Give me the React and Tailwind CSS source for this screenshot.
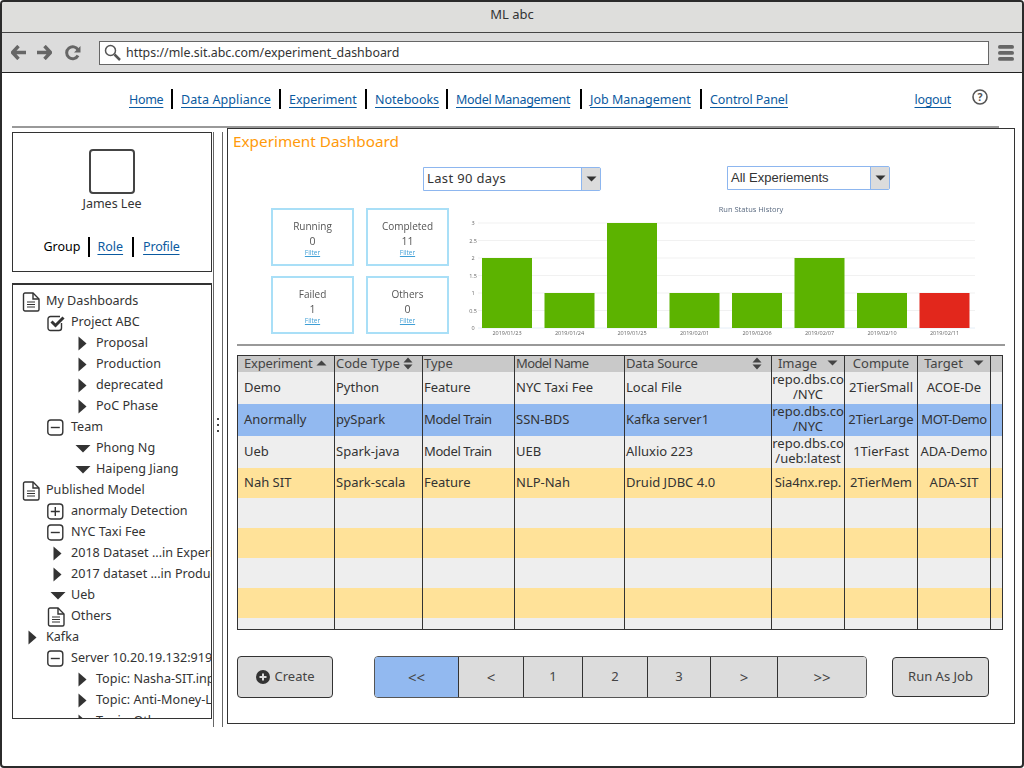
import React from "react";

const font = "font-['Noto_Sans','Open_Sans',sans-serif]";

const Sep = () => <span className="w-[2px] h-[20px] bg-black shrink-0" />;
const Lnk = ({ children, className = "" }) => (
  <a className={`text-[#0b5aa0] underline underline-offset-[3px] decoration-[1px] whitespace-nowrap text-[12.500px] ${className}`}>{children}</a>
);

const Doc = () => (
  <svg width="18" height="20" viewBox="0 0 18 20" fill="none" stroke="#333" strokeWidth="1.4">
    <path d="M3 1h8l6 6v10.500a1.500 1.500 0 0 1-1.500 1.500h-12.500a1.500 1.500 0 0 1-1.500-1.500v-15a1.500 1.500 0 0 1 1.500-1.500z" />
    <path d="M11 1v6h6" />
    <path d="M5 10h8M5 12.500h8M5 15h8" strokeWidth="1.200" />
  </svg>
);
const Box = ({ children }) => (
  <svg width="17" height="17" viewBox="0 0 17 17" fill="none" stroke="#333" strokeWidth="1.400">
    <rect x="0.800" y="1" width="15" height="15" rx="3" />
    {children}
  </svg>
);
const Check = () => (
  <svg width="18" height="18" viewBox="0 0 18 18" fill="none">
    <path d="M14.500 9v5a2.500 2.500 0 0 1-2.500 2.500h-8.500a2.500 2.500 0 0 1-2.500-2.500v-9a2.500 2.500 0 0 1 2.500-2.500h9.500" stroke="#333" strokeWidth="1.400" />
    <path d="M4.500 7.500l4 4 8-8" stroke="#333" strokeWidth="3" />
  </svg>
);
const Plus = () => <Box><path d="M8.300 4v9M3.800 8.500h9" /></Box>;
const Minus = () => <Box><path d="M3.800 8.500h9" /></Box>;
const Right = () => (
  <svg width="9" height="15" viewBox="0 0 9 15"><path d="M0.500 0.500L8.500 7.500L0.500 14.500z" fill="#333" /></svg>
);
const Down = () => (
  <svg width="16" height="9" viewBox="0 0 16 9"><path d="M0.500 1h15L8 8.500z" fill="#333" /></svg>
);
const CaretD = ({ c = "#333" }) => (
  <svg width="11" height="6" viewBox="0 0 11 6"><path d="M0.500 0.500h10L5.500 5.500z" fill={c} /></svg>
);
const CaretU = () => (
  <svg width="11" height="6" viewBox="0 0 11 6"><path d="M0.500 5.500h10L5.500 0.500z" fill="#444" /></svg>
);
const Sort = () => (
  <svg width="10" height="13" viewBox="0 0 10 13"><path d="M0.500 5.500h9L5 0.500zM0.500 7.500h9L5 12.500z" fill="#444" /></svg>
);

const ICONS = { doc: Doc, check: Check, plus: Plus, minus: Minus, right: Right, down: Down };

const tree = [
  [0, "doc", "My Dashboards"],
  [1, "check", "Project ABC"],
  [2, "right", "Proposal"],
  [2, "right", "Production"],
  [2, "right", "deprecated"],
  [2, "right", "PoC Phase"],
  [1, "minus", "Team"],
  [2, "down", "Phong Ng"],
  [2, "down", "Haipeng Jiang"],
  [0, "doc", "Published Model"],
  [1, "plus", "anormaly Detection"],
  [1, "minus", "NYC Taxi Fee"],
  [1, "right", "2018 Dataset ...in Experiment"],
  [1, "right", "2017 dataset ...in Production"],
  [1, "down", "Ueb"],
  [1, "doc", "Others"],
  [0, "right", "Kafka"],
  [1, "minus", "Server 10.20.19.132:9192"],
  [2, "right", "Topic: Nasha-SIT.input"],
  [2, "right", "Topic: Anti-Money-Laundering"],
  [2, "right", "Topic: Others"],
];
const PAD = ["pl-[9px]", "pl-[34px]", "pl-[59px]"];

const Stat = ({ t, n }) => (
  <div className="w-[83px] h-[58px] border-2 border-[#a9dff7] flex flex-col items-center pt-[9px] text-[#555] font-['Open_Sans',sans-serif] blur-[0.3px]">
    <span className="text-[10px] leading-[15px]">{t}</span>
    <span className="text-[10.500px] leading-[14px]">{n}</span>
    <span className="text-[6.500px] leading-[9px] text-[#3f9fd6] underline">Filter</span>
  </div>
);

const bars = [
  [482, 2, "2019/01/23"],
  [544.500, 1, "2019/01/24"],
  [607, 3, "2019/01/25"],
  [669.500, 1, "2019/02/01"],
  [732, 1, "2019/02/06"],
  [794.500, 2, "2019/02/07"],
  [857, 1, "2019/02/10"],
  [919.500, 1, "2019/02/11"],
];

const Chart = () => (
  <svg width="515" height="132" viewBox="465 204 515 132" className="blur-[0.35px] shrink-0" fontFamily="Open Sans, sans-serif">
    <text x="751" y="212" textAnchor="middle" fontSize="7.500" fill="#5a6a80">Run Status History</text>
    {[0, 0.5, 1, 1.500, 2, 2.500, 3].map((v) => (
      <g key={v}>
        <line x1="478" x2="975" y1={328 - v * 35} y2={328 - v * 35} stroke={v === 0 ? "#e4eef7" : "#f1f1f1"} strokeWidth="1" />
        <text x="473" y={330 - v * 35} textAnchor="middle" fontSize="5.500" fill="#666">{v}</text>
      </g>
    ))}
    {bars.map(([x, v, l], i) => (
      <g key={l}>
        <rect x={x} y={328 - v * 35} width="50" height={v * 35} fill={i === 7 ? "#e2271c" : "#5cb300"} />
        <text x={x + 25} y="334.500" textAnchor="middle" fontSize="5.500" fill="#666">{l}</text>
      </g>
    ))}
  </svg>
);

const CELLS = ["pl-[6px]", "pl-[1px]", "pl-[1px]", "pl-[1px]", "pl-[1px]", "justify-center text-center text-[12.400px] leading-[14px]", "justify-center text-center", "justify-center text-center", ""];
const TRACK = { "Model Train": "tracking-[-0.4px]", "MOT-Demo": "tracking-[-0.5px]", "Sia4nx.rep.": "tracking-[-0.1px]" };
const Row = ({ bg, h, cells = [] }) => (
  <div className={`grid grid-cols-[97px_88px_92px_110px_147px_73px_73px_73px_11px] ${bg} ${h} shrink-0`}>
    {CELLS.map((c, i) => (
      <div key={i} className={`flex items-center pb-[2px] ${i < 8 ? "border-r border-[#333]" : ""} text-[#333] text-[13px] leading-[15px] overflow-hidden whitespace-pre-line ${c}`}>
        <span className={TRACK[cells[i]] || ""}>{cells[i]}</span>
      </div>
    ))}
  </div>
);

const rows = [
  ["bg-[#eeeeee]", "h-[32px]", ["Demo", "Python", "Feature", "NYC Taxi Fee", "Local File", "repo.dbs.co\n/NYC", "2TierSmall", "ACOE-De"]],
  ["bg-[#92b9f0]", "h-[32px]", ["Anormally", "pySpark", "Model Train", "SSN-BDS", "Kafka server1", "repo.dbs.co\n/NYC", "2TierLarge", "MOT-Demo"]],
  ["bg-[#eeeeee]", "h-[32px]", ["Ueb", "Spark-java", "Model Train", "UEB", "Alluxio 223", "repo.dbs.co\n/ueb:latest", "1TierFast", "ADA-Demo"]],
  ["bg-[#ffe299]", "h-[30px]", ["Nah SIT", "Spark-scala", "Feature", "NLP-Nah", "Druid JDBC 4.0", "Sia4nx.rep.", "2TierMem", "ADA-SIT"]],
  ["bg-[#eeeeee]", "h-[30px]"],
  ["bg-[#ffe299]", "h-[30px]"],
  ["bg-[#eeeeee]", "h-[30px]"],
  ["bg-[#ffe299]", "h-[30px]"],
  ["bg-[#eeeeee]", "h-[11px]"],
];

const Select = ({ label, w, tf = "" }) => (
  <div className={`${w} h-[24px] border border-[#8db6ef] flex rounded-r-[2px] bg-white`}>
    <span className={`flex-1 pl-[3px] flex items-center text-[13px] text-[#333] ${tf}`}>{label}</span>
    <span className="w-[19px] bg-[#dcdcdc] border-l border-[#8db6ef] flex items-center justify-center"><CaretD /></span>
  </div>
);

const Pg = ({ w, active, big, children }) => (
  <div className={`${w} flex items-center justify-center border-r border-[#333] last:border-r-0 text-[#444] ${big ? "text-[15px]" : "text-[13px]"} ${active ? "bg-[#92b9f0]" : "bg-[#dcdcdc]"}`}>{children}</div>
);

const HC = "border-r border-[#333] flex items-center leading-[14px] pb-[2px]";

export default function App() {
  return (
    <div className={`w-[1024px] h-[768px] border-2 border-[#2b2b2b] rounded-[4px] bg-white flex flex-col overflow-hidden ${font} text-[13px] text-[#333]`}>
      <div className="h-[31px] shrink-0 bg-[#dededc] border-b border-[#444] flex justify-center pt-[3px] text-[13px] leading-[18px] text-[#333]">ML abc</div>
      <div className="h-[40px] shrink-0 bg-[#dcdcdc] border-b border-[#222] flex items-center pl-[9px]">
        <svg width="16" height="15" viewBox="0 0 16 15" className="mr-[9px]"><path d="M7.500 1L1.500 7.500L7.500 14M2 7.500H15" fill="none" stroke="#666" strokeWidth="3.400" strokeLinejoin="round" /></svg>
        <svg width="16" height="15" viewBox="0 0 16 15" className="mr-[13px]"><path d="M8.500 1L14.500 7.500L8.500 14M14 7.500H1" fill="none" stroke="#666" strokeWidth="3.400" strokeLinejoin="round" /></svg>
        <svg width="16" height="16" viewBox="0 0 16 16" className="mr-[18px]"><path d="M13 10.500A6 6 0 1 1 13 5" fill="none" stroke="#666" strokeWidth="3" /><path d="M15.500 1v6.500H9z" fill="#666" /></svg>
        <div className="w-[890px] h-[24px] bg-white border border-[#666] flex items-center">
          <svg width="17" height="17" viewBox="0 0 17 17" className="ml-[4px] mr-[5px]"><circle cx="6.500" cy="6.500" r="5" fill="none" stroke="#555" strokeWidth="1.500" /><path d="M10.500 10.500L16 16" stroke="#555" strokeWidth="2.500" /></svg>
          <span className="text-[12.400px] text-[#333] pt-[1px]">https://mle.sit.abc.com/experiment_dashboard</span>
        </div>
        <svg width="16" height="16" viewBox="0 0 16 16" className="ml-[9px]"><rect y="0" width="16" height="3.800" rx="1.900" fill="#666" /><rect y="6" width="16" height="3.800" rx="1.900" fill="#666" /><rect y="12" width="16" height="3.800" rx="1.900" fill="#666" /></svg>
      </div>

      <div className="h-[53px] shrink-0 flex items-start pt-[16px] pl-[127px] gap-[8px] leading-[20px]">
        <Lnk className="w-[34px] tracking-[-0.3px] pt-[1px]">Home</Lnk><Sep />
        <Lnk className="w-[90px] tracking-[0.1px] pt-[1px]">Data Appliance</Lnk><Sep />
        <Lnk className="w-[68px] pt-[1px]">Experiment</Lnk><Sep />
        <Lnk className="w-[63px] pt-[1px]">Notebooks</Lnk><Sep />
        <Lnk className="w-[116px] tracking-[-0.3px] pt-[1px]">Model Management</Lnk><Sep />
        <Lnk className="w-[102px] pt-[1px]">Job Management</Lnk><Sep />
        <Lnk className="w-[78px] tracking-[-0.1px] pt-[1px]">Control Panel</Lnk>
        <Lnk className="ml-auto tracking-[-0.3px] pt-[1px]">logout</Lnk>
        <svg width="16" height="16" viewBox="0 0 16 16" className="ml-[13px] mr-[34px]"><circle cx="8" cy="8" r="7" fill="none" stroke="#555" strokeWidth="1.600" /><text x="8" y="11.500" textAnchor="middle" fontSize="10.500" fontWeight="700" fill="#555">?</text></svg>
      </div>

      <div className="h-[2px] shrink-0 ml-[10px] w-[987px] bg-[#999]" />

      <div className="flex flex-1 pl-[10px] items-start">
        <div className="w-[200px] shrink-0 mt-[4px] flex flex-col">
          <div className="h-[140px] border border-[#333] flex flex-col items-center pt-[16px]">
            <div className="w-[46px] h-[45px] rounded-[4px] border-2 border-[#444] mr-[1px]" />
            <span className="mt-[1px] leading-[18px] text-[12.500px]">James Lee</span>
            <div className="mt-[24px] flex items-start gap-[9px] leading-[20px] text-[12.500px] mr-[1px]">
              <span className="text-black -mr-[1px]">Group</span><Sep />
              <Lnk className="-ml-[2px]">Role</Lnk><Sep />
              <Lnk className="tracking-[-0.2px]">Profile</Lnk>
            </div>
          </div>
          <div className="mt-[11px] h-[436px] border border-t-2 border-[#333] overflow-hidden pt-[6px] text-[12.600px]">
            {tree.map(([lvl, ic, t], i) => {
              const I = ICONS[ic];
              return (
                <div key={i} className={`h-[21px] flex items-center gap-[3px] whitespace-nowrap ${PAD[lvl]}`}>
                  <span className={`w-[21px] flex shrink-0 ${ic === "right" || ic === "down" ? "justify-center" : "justify-start"}`}><I /></span>
                  <span>{t}</span>
                </div>
              );
            })}
          </div>
        </div>

        <div className="w-[10px] h-[595px] mt-[4px] ml-[1px] shrink-0 border-x border-[#666] flex flex-col items-center justify-center gap-[4px] pb-[9px]">
          <span className="w-[2px] h-[2px] bg-[#444]" />
          <span className="w-[2px] h-[2px] bg-[#444]" />
          <span className="w-[2px] h-[2px] bg-[#444]" />
        </div>

        <div className="w-[788px] h-[596px] ml-[4px] border border-[#333] flex flex-col shrink-0">
          <div className="h-[25px] pl-[5px] flex items-center text-[15.300px] text-[#ff9a0a] shrink-0">Experiment Dashboard</div>
          <div className="h-[25px] mt-[12px] flex items-start shrink-0 pl-[195px]">
            <div className="mt-[1px]"><Select label="Last 90 days" w="w-[178px]" tf="tracking-[0.35px]" /></div>
            <div className="ml-[126px]"><Select label="All Experiements" w="w-[163px]" tf="font-['Liberation_Sans',sans-serif] text-[13.500px]" /></div>
          </div>
          <div className="flex items-start shrink-0 mt-[13px] pl-[43px] gap-[16px]">
            <div className="grid grid-cols-2 gap-x-[12px] gap-y-[10px] mt-[4px]">
              <Stat t="Running" n="0" />
              <Stat t="Completed" n="11" />
              <Stat t="Failed" n="1" />
              <Stat t="Others" n="0" />
            </div>
            <Chart />
          </div>
          <div className="h-[2px] mt-[8px] ml-[9px] w-[768px] bg-[#999] shrink-0" />
          <div className="mt-[9px] ml-[9px] w-[766px] h-[275px] border border-[#333] flex flex-col shrink-0 overflow-hidden">
            <div className="grid grid-cols-[97px_88px_92px_110px_147px_73px_73px_73px_11px] h-[16px] bg-[#c9c9c9] shrink-0 text-[13px] text-[#444]">
              <div className={`${HC} pl-[6px] justify-between pr-[7px]`}><span className="tracking-[-0.2px]">Experiment</span><CaretU /></div>
              <div className={`${HC} pl-[1px] justify-between pr-[9px]`}><span>Code Type</span><Sort /></div>
              <div className={`${HC} pl-[1px]`}>Type</div>
              <div className={`${HC} pl-[1px]`}><span className="tracking-[-0.6px]">Model Name</span></div>
              <div className={`${HC} pl-[1px] justify-between pr-[9px]`}><span className="tracking-[-0.2px]">Data Source</span><Sort /></div>
              <div className={`${HC} justify-center gap-[10px]`}><span>Image</span><CaretD c="#444" /></div>
              <div className={`${HC} justify-center`}>Compute</div>
              <div className={`${HC} justify-center gap-[10px]`}><span>Target</span><CaretD c="#444" /></div>
              <div />
            </div>
            {rows.map(([bg, h, cells], i) => <Row key={i} bg={bg} h={h} cells={cells} />)}
          </div>
          <div className="mt-[26px] ml-[9px] flex items-start shrink-0">
            <div className="w-[96px] h-[42px] bg-[#dcdcdc] border border-[#333] rounded-[4px] flex items-center justify-center gap-[5px] text-[#444]">
              <svg width="14" height="14" viewBox="0 0 14 14"><circle cx="7" cy="7" r="7" fill="#333" /><path d="M7 3.500v7M3.500 7h7" stroke="#dcdcdc" strokeWidth="2" /></svg>
              <span>Create</span>
            </div>
            <div className="ml-[41px] w-[493px] h-[42px] border border-[#555] rounded-[4px] flex overflow-hidden">
              <Pg w="w-[84px]" active big>{"<<"}</Pg>
              <Pg w="w-[65px]" big>{"<"}</Pg>
              <Pg w="w-[59px]">1</Pg>
              <Pg w="w-[65px]">2</Pg>
              <Pg w="w-[63px]">3</Pg>
              <Pg w="w-[67px]" big>{">"}</Pg>
              <Pg w="w-[88px]" big>{">>"}</Pg>
            </div>
            <div className="ml-[25px] mt-[1px] w-[97px] h-[40px] bg-[#dcdcdc] border border-[#333] rounded-[4px] flex items-center justify-center text-[#444]">Run As Job</div>
          </div>
        </div>
      </div>
    </div>
  );
}
